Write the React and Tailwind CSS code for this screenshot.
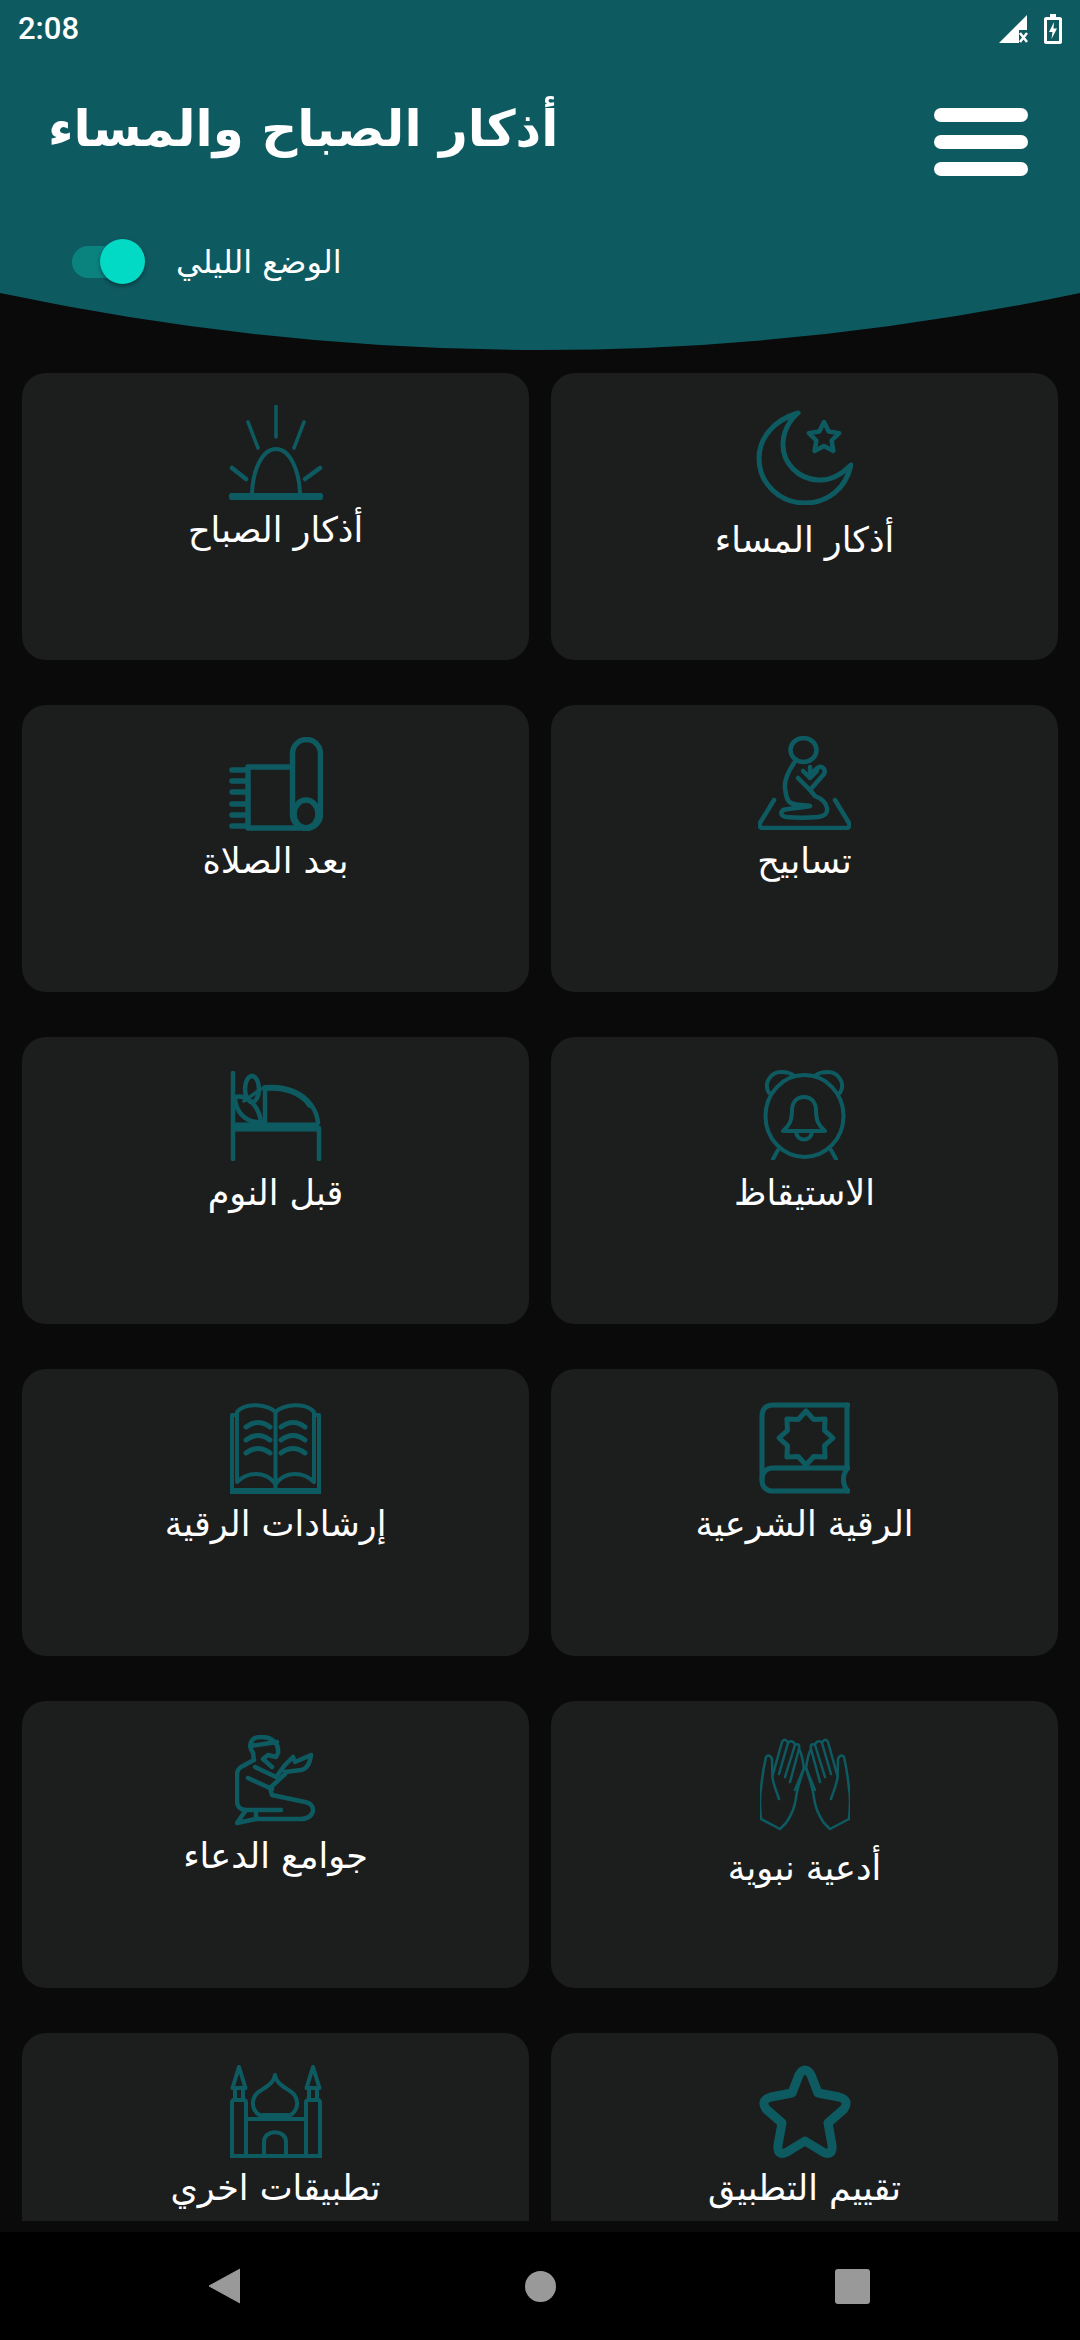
const TEAL = '#0e5a61';

function Svg({ w, h, sw = 4, children }) {
  return (
    <svg width={w} height={h} viewBox={`0 0 ${w} ${h}`} fill="none" stroke={TEAL} strokeWidth={sw} strokeLinecap="round" strokeLinejoin="round" className="block">
      {children}
    </svg>
  );
}

const Moon = () => (
  <Svg w={97} h={95} sw={5}>
    <path d="M42 3C18 10 3 28 3 48C3 74 24 93 49 93C72 93 90 78 95 55C85 65 74 71 62 70C42 69 27 53 27 35C27 22 33 11 42 3Z" />
    <path strokeWidth="4.5" d="M68 12L72.7 21.5L83.2 23.1L75.6 30.5L77.4 41L68 36L58.6 41L60.4 30.5L52.8 23.1L63.3 21.5Z" />
  </Svg>
);

const Sun = () => (
  <Svg w={94} h={95} sw={4}>
    <rect x="0" y="88" width="94" height="7" rx="2" fill={TEAL} stroke="none" />
    <path d="M23 88C24 65 33 44 47 44C61 44 70 65 71 88" />
    <path d="M47 1V32M19 17L29 43M75 17L65 43" strokeWidth="3.5" />
    <path d="M3 63L17 74M91 63L76 74" strokeWidth="4.5" />
  </Svg>
);

const Prayer = () => (
  <Svg w={93} h={94} sw={4.5}>
    <ellipse cx="45.5" cy="14" rx="13" ry="12" />
    <path d="M36 27C30 36 26 44 27 52C28 60 29 65 33 67C38 70 46 68 52 70C43 72 33 72 25 74C22 77 23 80 28 81C38 82 50 82 60 81C66 80 70 78 69 72C68 66 62 62 57 60L52 54" />
    <path d="M40 42L52 54L66 38C68 34 65 30 61 31C57 33 55 36 52 39" />
    <path d="M45 35L52 42L59 35M52 31V42" />
    <path d="M16 64L2 87C1 90 2 92 5 92H88C91 92 92 90 91 87L77 64" />
  </Svg>
);

const Rug = () => (
  <Svg w={94} h={94} sw={5.5}>
    <rect x="63.5" y="2.5" width="28" height="89" rx="14" />
    <ellipse cx="77" cy="77" rx="12" ry="14" />
    <path d="M63 30H19V91H75" />
    <path d="M3 33H18M3 44H18M3 55H18M3 67H18M3 78H18M3 89H18" />
  </Svg>
);

const Clock = () => (
  <Svg w={83} h={90} sw={4}>
    <ellipse cx="41.5" cy="46" rx="39" ry="41" />
    <path d="M6 23C0 13 8 2 18 2C24 2 28 3 31 6M77 23C83 13 75 2 65 2C59 2 55 3 52 6" />
    <path d="M15 80L10 89M68 80L73 89" />
    <path d="M20 61H62C55 55 53 50 53 40C53 32 48 27 41 27C34 27 29 32 29 40C29 50 27 55 20 61Z" />
    <path d="M33 62C34 72 48 72 49 62" />
  </Svg>
);

const Bed = () => (
  <Svg w={92} h={90} sw={4.5}>
    <path d="M3 2V88M89 57V88" />
    <path d="M3 56H89" strokeWidth="9" strokeLinecap="butt" />
    <path d="M35 17C60 14 86 28 88 52M35 17V52" />
    <path d="M35 17C55 15 72 22 80 34" strokeWidth="6" />
    <ellipse cx="22" cy="18" rx="7" ry="13" />
    <path d="M5 26C20 22 30 40 31 51C15 52 5 40 5 26Z" />
    <path d="M14 30L31 18" strokeWidth="3.5" />
  </Svg>
);

const Quran = () => (
  <Svg w={91} h={92} sw={5}>
    <path d="M89 3H14C7 3 3 7 3 14V78C3 85 7 89 14 89H89" />
    <path d="M88 3V66H14C7 66 3 71 3 78" />
    <path d="M89 66C83 72 83 83 89 89" />
    <path d="M47 9L54.7 17.5L66.1 16.9L65.5 28.3L74 36L65.5 43.7L66.1 55.1L54.7 54.5L47 63L39.3 54.5L27.9 55.1L28.5 43.7L20 36L28.5 28.3L27.9 16.9L39.3 17.5Z" />
  </Svg>
);

const OpenBook = () => (
  <Svg w={91} h={91} sw={4}>
    <path d="M45.5 9C38 2 16 -2 7 9V79C18 68 36 68 45.5 81C55 68 73 68 84 79V9C75 -2 53 2 45.5 9ZM45.5 9V88" />
    <path d="M7 12H2V88H89V12H84" />
    <path d="M0 88H91" strokeWidth="6" strokeLinecap="butt" />
    <path d="M16 24Q28 15 40 24M16 37Q28 28 40 37M16 50Q28 41 40 50M51 24Q63 15 75 24M51 37Q63 28 75 37M51 50Q63 41 75 50" strokeWidth="5" />
  </Svg>
);

const Hand = () => (
  <g>
    <path d="M1 81C0 70 -1 60 1 51C2 40 4 28 6 19C8 16 11 18 12 21L12.5 40C14 48 17 55 19 61" />
    <path d="M12.5 38L22 4C24 0 27 2 28 5L19 36M28 5C30 2 34 3 35 7L25 39M35 7C38 5 40 7 39 11L30 44" />
    <path d="M44 30L35 52" />
    <path d="M44 30C41 40 37 50 36 60C35 68 31 78 26 85L20 91L1 81" />
    <path d="M39 11C42 16 43 23 44 30" />
  </g>
);

const Hands = () => (
  <Svg w={90} h={94} sw={2.5}>
    <Hand />
    <g transform="translate(90 0) scale(-1 1)">
      <Hand />
    </g>
  </Svg>
);

const Man = () => (
  <Svg w={81} h={91} sw={4.5}>
    <path d="M18 18C13 11 15 2 26 2C37 2 44 8 43 18L41 22L33 20L28 24L37 32" />
    <path d="M15 11L42 7" />
    <path d="M18 18L19 25L6 32C3 34 2 36 2 40V66C2 72 6 75 11 75H46" />
    <path d="M11 75L2 88L21 84H66C73 84 78 80 78 75C78 70 75 68 70 67L37 60L35 53L50 39" />
    <path d="M20 32L41 42L50 30L58 22L60 27L76 20C75 28 72 34 66 35L50 37" />
    <path d="M13 43L37 54M21 75V84" />
  </Svg>
);

const Mosque = () => (
  <Svg w={92} h={93} sw={4}>
    <path d="M9 2L2.5 23H15.5ZM83 2L76.5 23H89.5Z" />
    <path d="M5 24V35M13 24V35M79 24V35M87 24V35" />
    <path d="M2 92V37C2 36 3 35 4 35H14C15 35 16 36 16 37V92M76 92V37C76 36 77 35 78 35H88C89 35 90 36 90 37V92" />
    <path d="M45 10C44 18 36 22 30 26C22 31 20 42 28 49C30 51 32 50 34 50H56C58 50 60 51 62 49C70 42 68 31 60 26C54 22 46 18 45 10Z" />
    <path d="M16 54H76M33 52H57" />
    <path d="M34 92V77C34 64 56 64 56 77V92" />
    <path d="M0 91H92" strokeWidth="4" strokeLinecap="butt" />
  </Svg>
);

const StarIcon = () => (
  <Svg w={92} h={93} sw={9}>
    <path d="M40 10Q46 0 52 10L59 28L80 32Q91 35 85 44L69 58L73 80Q74 92 64 87L46 76L28 87Q18 92 19 80L23 58L7 44Q1 35 12 32L33 28Z" />
  </Svg>
);

// order is right column first, the grid runs rtl
const items = [
  { label: 'أذكار المساء', Icon: Moon, pad: 'pt-[37px]', gap: 'mt-[13px]' },
  { label: 'أذكار الصباح', Icon: Sun, pad: 'pt-[32px]', gap: 'mt-[8px]' },
  { label: 'تسابيح', Icon: Prayer, pad: 'pt-[31px]', gap: 'mt-[9px]' },
  { label: 'بعد الصلاة', Icon: Rug, pad: 'pt-[32px]', gap: 'mt-[8px]' },
  { label: 'الاستيقاظ', Icon: Clock, pad: 'pt-[33px]', gap: 'mt-[11px]' },
  { label: 'قبل النوم', Icon: Bed, pad: 'pt-[34px]', gap: 'mt-[10px]' },
  { label: 'الرقية الشرعية', Icon: Quran, pad: 'pt-[33px]', gap: 'mt-[8px]' },
  { label: 'إرشادات الرقية', Icon: OpenBook, pad: 'pt-[34px]', gap: 'mt-[8px]' },
  { label: 'أدعية نبوية', Icon: Hands, pad: 'pt-[37px]', gap: 'mt-[14px]' },
  { label: 'جوامع الدعاء', Icon: Man, pad: 'pt-[34px]', gap: 'mt-[8px]' },
  { label: 'تقييم التطبيق', Icon: StarIcon, pad: 'pt-[32px]', gap: 'mt-[8px]' },
  { label: 'تطبيقات اخري', Icon: Mosque, pad: 'pt-[32px]', gap: 'mt-[8px]' },
];

function StatusBar() {
  return (
    <div className="flex h-[56px] items-center justify-between pl-[18px] pr-[18px] pt-[1px]">
      <span className="font-['Roboto',sans-serif] text-[31px] font-medium leading-none text-white">2:08</span>
      <div className="flex items-center gap-[16px]">
        <svg width="29" height="28" viewBox="0 0 29 28" className="block">
          <path d="M0 28L28 0V15H20V28Z" fill="#fff" />
          <path d="M21 18L28 27M28 18L21 27" stroke="#fff" strokeWidth="2.5" />
        </svg>
        <svg width="18" height="30" viewBox="0 0 18 30" className="block">
          <path d="M6 0H12V3H16C17 3 18 4 18 5V28C18 29 17 30 16 30H2C1 30 0 29 0 28V5C0 4 1 3 2 3H6Z" fill="#fff" />
          <rect x="3" y="6" width="12" height="21" fill={TEAL} />
          <path d="M10 8L5 18H8.5L7.5 25L13 14.5H9.5Z" fill="#fff" />
        </svg>
      </div>
    </div>
  );
}

function Header() {
  return (
    <header className="h-[293px] bg-[#0e5a61]">
      <StatusBar />
      <div className="flex items-start justify-between pl-[48px] pr-[52px] pt-[37px]">
        <h1 className="h-[72px] font-['DejaVu_Sans',sans-serif] text-[50px] font-bold leading-[72px] text-white">أذكار الصباح والمساء</h1>
        <div className="mt-[15px] flex w-[94px] flex-col gap-[13px]">
          <div className="h-[14px] rounded-[7px] bg-white" />
          <div className="h-[14px] rounded-[7px] bg-white" />
          <div className="h-[14px] rounded-[7px] bg-white" />
        </div>
      </div>
      <div className="mt-[63px] flex items-center pl-[72px]">
        <div className="relative flex h-[45px] w-[73px] items-center">
          <div className="h-[32px] w-[62px] rounded-full bg-[#0a837f]" />
          <div className="absolute right-0 top-0 h-[45px] w-[45px] rounded-full bg-[#03dac5] shadow-[0_2px_4px_rgba(0,0,0,0.4)]" />
        </div>
        <span className="ml-[31px] font-['DejaVu_Sans',sans-serif] text-[32px] leading-none text-white">الوضع الليلي</span>
      </div>
    </header>
  );
}

export default function App() {
  return (
    <div className="flex h-[2340px] w-[1080px] flex-col overflow-hidden bg-[#0a0a0a]">
      <Header />
      <svg width="1080" height="57" viewBox="0 0 1080 57" className="block shrink-0">
        <path d="M0 0Q540 114 1080 0Z" fill={TEAL} />
      </svg>
      <div className="h-[1871px] overflow-hidden pt-[23px]">
        <div dir="rtl" className="grid grid-cols-2 gap-x-[22px] gap-y-[45px] px-[22px]">
          {items.map(({ label, Icon, pad, gap }) => (
            <div key={label} className={`flex h-[287px] flex-col items-center rounded-[24px] bg-[#1c1e1e] ${pad}`}>
              <Icon />
              <span className={`h-[44px] font-['DejaVu_Sans',sans-serif] text-[35px] leading-[44px] text-white ${gap}`}>{label}</span>
            </div>
          ))}
        </div>
      </div>
      <div className="h-[11px]" />
      <nav className="flex h-[108px] items-center bg-black pl-[208px]">
        <svg width="32" height="36" viewBox="0 0 32 36" className="block">
          <path d="M32 1V35L1 18Z" fill="#999" stroke="#999" strokeWidth="1" strokeLinejoin="round" />
        </svg>
        <div className="ml-[285px] h-[31px] w-[31px] rounded-full bg-[#999]" />
        <div className="ml-[279px] h-[35px] w-[35px] rounded-[3px] bg-[#999]" />
      </nav>
    </div>
  );
}
